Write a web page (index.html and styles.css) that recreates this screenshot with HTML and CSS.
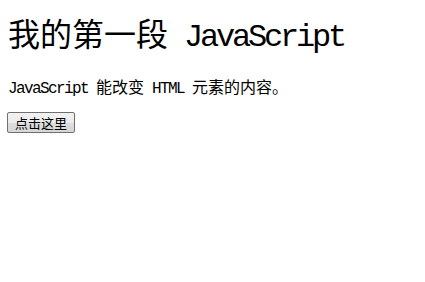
FILE: index.html
```html
<!DOCTYPE html>
<html lang="zh-CN">
<head>
<meta charset="utf-8">
<title>我的第一段 JavaScript</title>
<link rel="stylesheet" href="styles.css">
</head>
<body>
<div class="page">
  <h1 class="title">我的第一段<span class="lat"> JavaScript</span></h1>
  <p id="demo" class="text"><span class="lat">JavaScript </span>能改变<span class="lat"> HTML </span>元素的内容。</p>
  <div class="actions">
    <button type="button" class="btn">点击这里</button>
  </div>
</div>
</body>
</html>
```
FILE: styles.css
```css
html, body {
  margin: 0;
  padding: 0;
  background: #ffffff;
}

.page {
  padding: 16px 8px 0 8px;
  color: #000000;
  font-family: "Noto Sans CJK SC", "Liberation Mono", monospace;
  font-size: 16px;
}

.lat {
  font-family: "Liberation Mono", "Noto Sans CJK SC", monospace;
  letter-spacing: -0.1em;
  white-space: pre;
}

.title {
  margin: 0;
  font-size: 32px;
  line-height: 32px;
  font-weight: 400;
  white-space: nowrap;
}

.text {
  margin: 24px 0 0 0;
  font-size: 16px;
  line-height: 16px;
  white-space: nowrap;
}

.actions {
  margin-top: 15px;
  display: flex;
}

.btn {
  margin: 0 0 0 -1px;
  padding: 2px 7px;
  width: 68px;
  height: 21px;
  box-sizing: border-box;
  border: 1px solid #707070;
  border-radius: 2px;
  background: linear-gradient(#f2f2f2, #ebebeb 50%, #dddddd 50%, #d6d6d6);
  color: #000000;
  font-family: "Noto Sans CJK SC", sans-serif;
  font-size: 13px;
  line-height: 15px;
  white-space: nowrap;
}
```
